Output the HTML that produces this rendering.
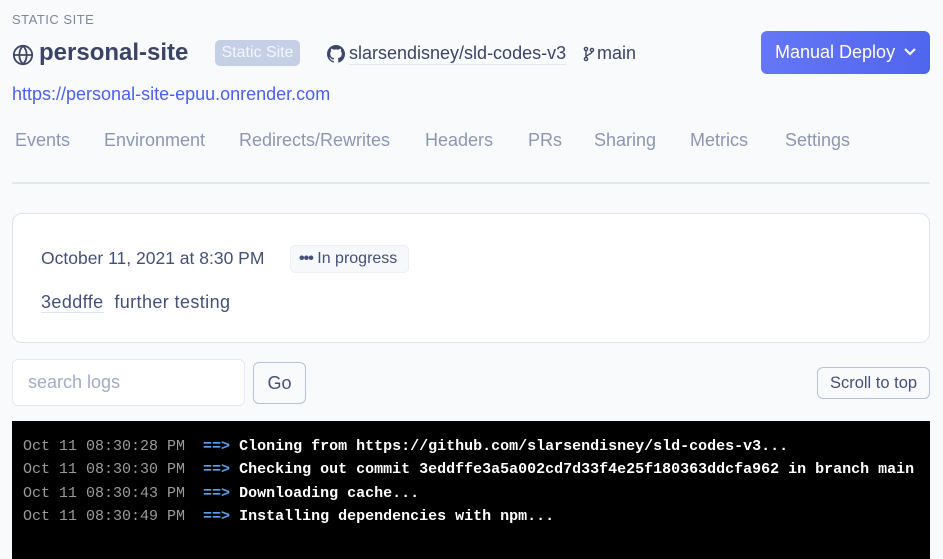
<!DOCTYPE html>
<html><head><meta charset="utf-8"><style>
*{box-sizing:border-box;margin:0;padding:0}
body{width:943px;height:559px;background:#f8fafc;font-family:"Liberation Sans",sans-serif;position:relative;overflow:hidden;color:#3d4769}
.a{position:absolute;white-space:nowrap}
.tab{position:absolute;top:130px;font-size:18px;color:#8d96b3}
.log{font-family:"Liberation Mono",monospace;font-size:15px;position:absolute;left:23px;white-space:pre}
.g{color:#9a9a9a}.ar{color:#5aa0f0;font-weight:bold}.w{color:#fff;font-weight:bold}
</style></head><body>
<div class="a" style="left:12px;top:12px;font-size:13px;letter-spacing:.5px;color:#7d86a3">STATIC SITE</div>
<svg class="a" style="left:12px;top:44px" width="22" height="22" viewBox="0 0 24 24" fill="none" stroke="#3d4769" stroke-width="2"><circle cx="12" cy="12" r="10"/><path d="M2 12h20M12 2c3 3 4 6.5 4 10s-1 7-4 10M12 2c-3 3-4 6.5-4 10s1 7 4 10"/></svg>
<div class="a" style="left:39px;top:39px;font-size:24px;font-weight:bold;color:#3b4466">personal-site</div>
<div class="a" style="left:215px;top:40px;width:85px;height:26px;border-radius:5px;background:#c5cfe6;color:#f4f6fb;font-size:16px;text-align:center;line-height:26px">Static Site</div>
<svg class="a" style="left:327px;top:45px" width="18" height="18" viewBox="0 0 16 16" fill="#3d4769"><path d="M8 0C3.58 0 0 3.580 0 8c0 3.54 2.29 6.530 5.47 7.59.4.07.55-.17.55-.38v-1.33c-2.23.48-2.7-1.07-2.7-1.07-.36-.92-.89-1.170-.89-1.170-.73-.5.05-.49.05-.49.8.06 1.23.83 1.23.83.71 1.22 1.87.87 2.33.66.07-.52.28-.87.51-1.07-1.78-.2-3.64-.89-3.64-3.95 0-.87.31-1.59.82-2.15-.08-.2-.36-1.02.08-2.12 0 0 .67-.21 2.2.82.64-.18 1.32-.27 2-.27.68 0 1.36.09 2 .27 1.53-1.04 2.2-.82 2.2-.82.44 1.1.16 1.92.08 2.12.51.56.82 1.27.82 2.15 0 3.07-1.87 3.75-3.65 3.95.29.25.54.73.54 1.48v2.2c0 .21.15.46.55.38A8.01 8.01 0 0016 8c0-4.420-3.580-8-8-8z"/></svg>
<div class="a" style="left:349px;top:43px;font-size:18px;color:#3b4466;border-bottom:1px solid #e2e6ef">slarsendisney/sld-codes-v3</div>
<svg class="a" style="left:583px;top:46px" width="12" height="16" viewBox="0 0 12 16" fill="none" stroke="#3d4769" stroke-width="1.4"><circle cx="3" cy="3" r="1.6"/><circle cx="3" cy="13" r="1.6"/><circle cx="9" cy="4" r="1.6"/><path d="M3 4.6v6.8M9 5.600c0 3-6 2.5-6 5.8"/></svg>
<div class="a" style="left:597px;top:43px;font-size:18px;color:#3b4466">main</div>
<div class="a" style="left:761px;top:31px;width:169px;height:43px;border-radius:6px;background:linear-gradient(90deg,#6577f7,#5065ee);color:#fff;font-size:18px;line-height:43px;padding-left:14px">Manual Deploy</div>
<svg class="a" style="left:903px;top:47px" width="14" height="10" viewBox="0 0 14 10" fill="none" stroke="#fff" stroke-width="2"><path d="M2 2l5 5 5-5"/></svg>
<div class="a" style="left:12px;top:84px;font-size:18px;color:#4a60f0">https://personal-site-epuu.onrender.com</div>
<div class="tab" style="left:15px">Events</div>
<div class="tab" style="left:104px">Environment</div>
<div class="tab" style="left:239px">Redirects/Rewrites</div>
<div class="tab" style="left:425px">Headers</div>
<div class="tab" style="left:528px">PRs</div>
<div class="tab" style="left:594px">Sharing</div>
<div class="tab" style="left:690px">Metrics</div>
<div class="tab" style="left:785px">Settings</div>
<div class="a" style="left:12px;top:182px;width:918px;height:2px;background:#e3e8f1"></div>
<div class="a" style="left:12px;top:213px;width:918px;height:130px;border:1px solid #dde3f1;border-radius:10px;background:#fff"></div>
<div class="a" style="left:41px;top:248px;font-size:17.5px;color:#45507a">October 11, 2021 at 8:30 PM</div>
<div class="a" style="left:290px;top:245px;width:119px;height:28px;border:1px solid #eceff5;border-radius:5px;background:#f6f8fb;font-size:16px;line-height:26px;padding-left:8px;color:#45507a"><b style="letter-spacing:-1px">•••</b> In progress</div>
<div class="a" style="left:41px;top:292px;font-size:18px;letter-spacing:0.4px;color:#45507a"><span style="border-bottom:1px solid #dde3f1">3eddffe</span>&nbsp; further testing</div>
<div class="a" style="left:12px;top:359px;width:233px;height:47px;border:1px solid #e3e8f3;border-radius:6px;background:#fff;font-size:18px;color:#a3abc6;line-height:45px;padding-left:15px">search logs</div>
<div class="a" style="left:253px;top:362px;width:53px;height:42px;border:1px solid #b8c2de;border-radius:6px;font-size:18px;line-height:40px;text-align:center;color:#45507a">Go</div>
<div class="a" style="left:817px;top:367px;width:113px;height:32px;border:1px solid #b8c2de;border-radius:6px;font-size:16.5px;line-height:30px;text-align:center;color:#45507a">Scroll to top</div>
<div class="a" style="left:12px;top:421px;width:918px;height:138px;background:#000"></div>
<div class="log" style="top:438px"><span class="g">Oct 11 08:30:28 PM</span>  <span class="ar">==&gt;</span> <span class="w">Cloning from https://github.com/slarsendisney/sld-codes-v3...</span></div>
<div class="log" style="top:461px"><span class="g">Oct 11 08:30:30 PM</span>  <span class="ar">==&gt;</span> <span class="w">Checking out commit 3eddffe3a5a002cd7d33f4e25f180363ddcfa962 in branch main</span></div>
<div class="log" style="top:485px"><span class="g">Oct 11 08:30:43 PM</span>  <span class="ar">==&gt;</span> <span class="w">Downloading cache...</span></div>
<div class="log" style="top:508px"><span class="g">Oct 11 08:30:49 PM</span>  <span class="ar">==&gt;</span> <span class="w">Installing dependencies with npm...</span></div>
</body></html>
